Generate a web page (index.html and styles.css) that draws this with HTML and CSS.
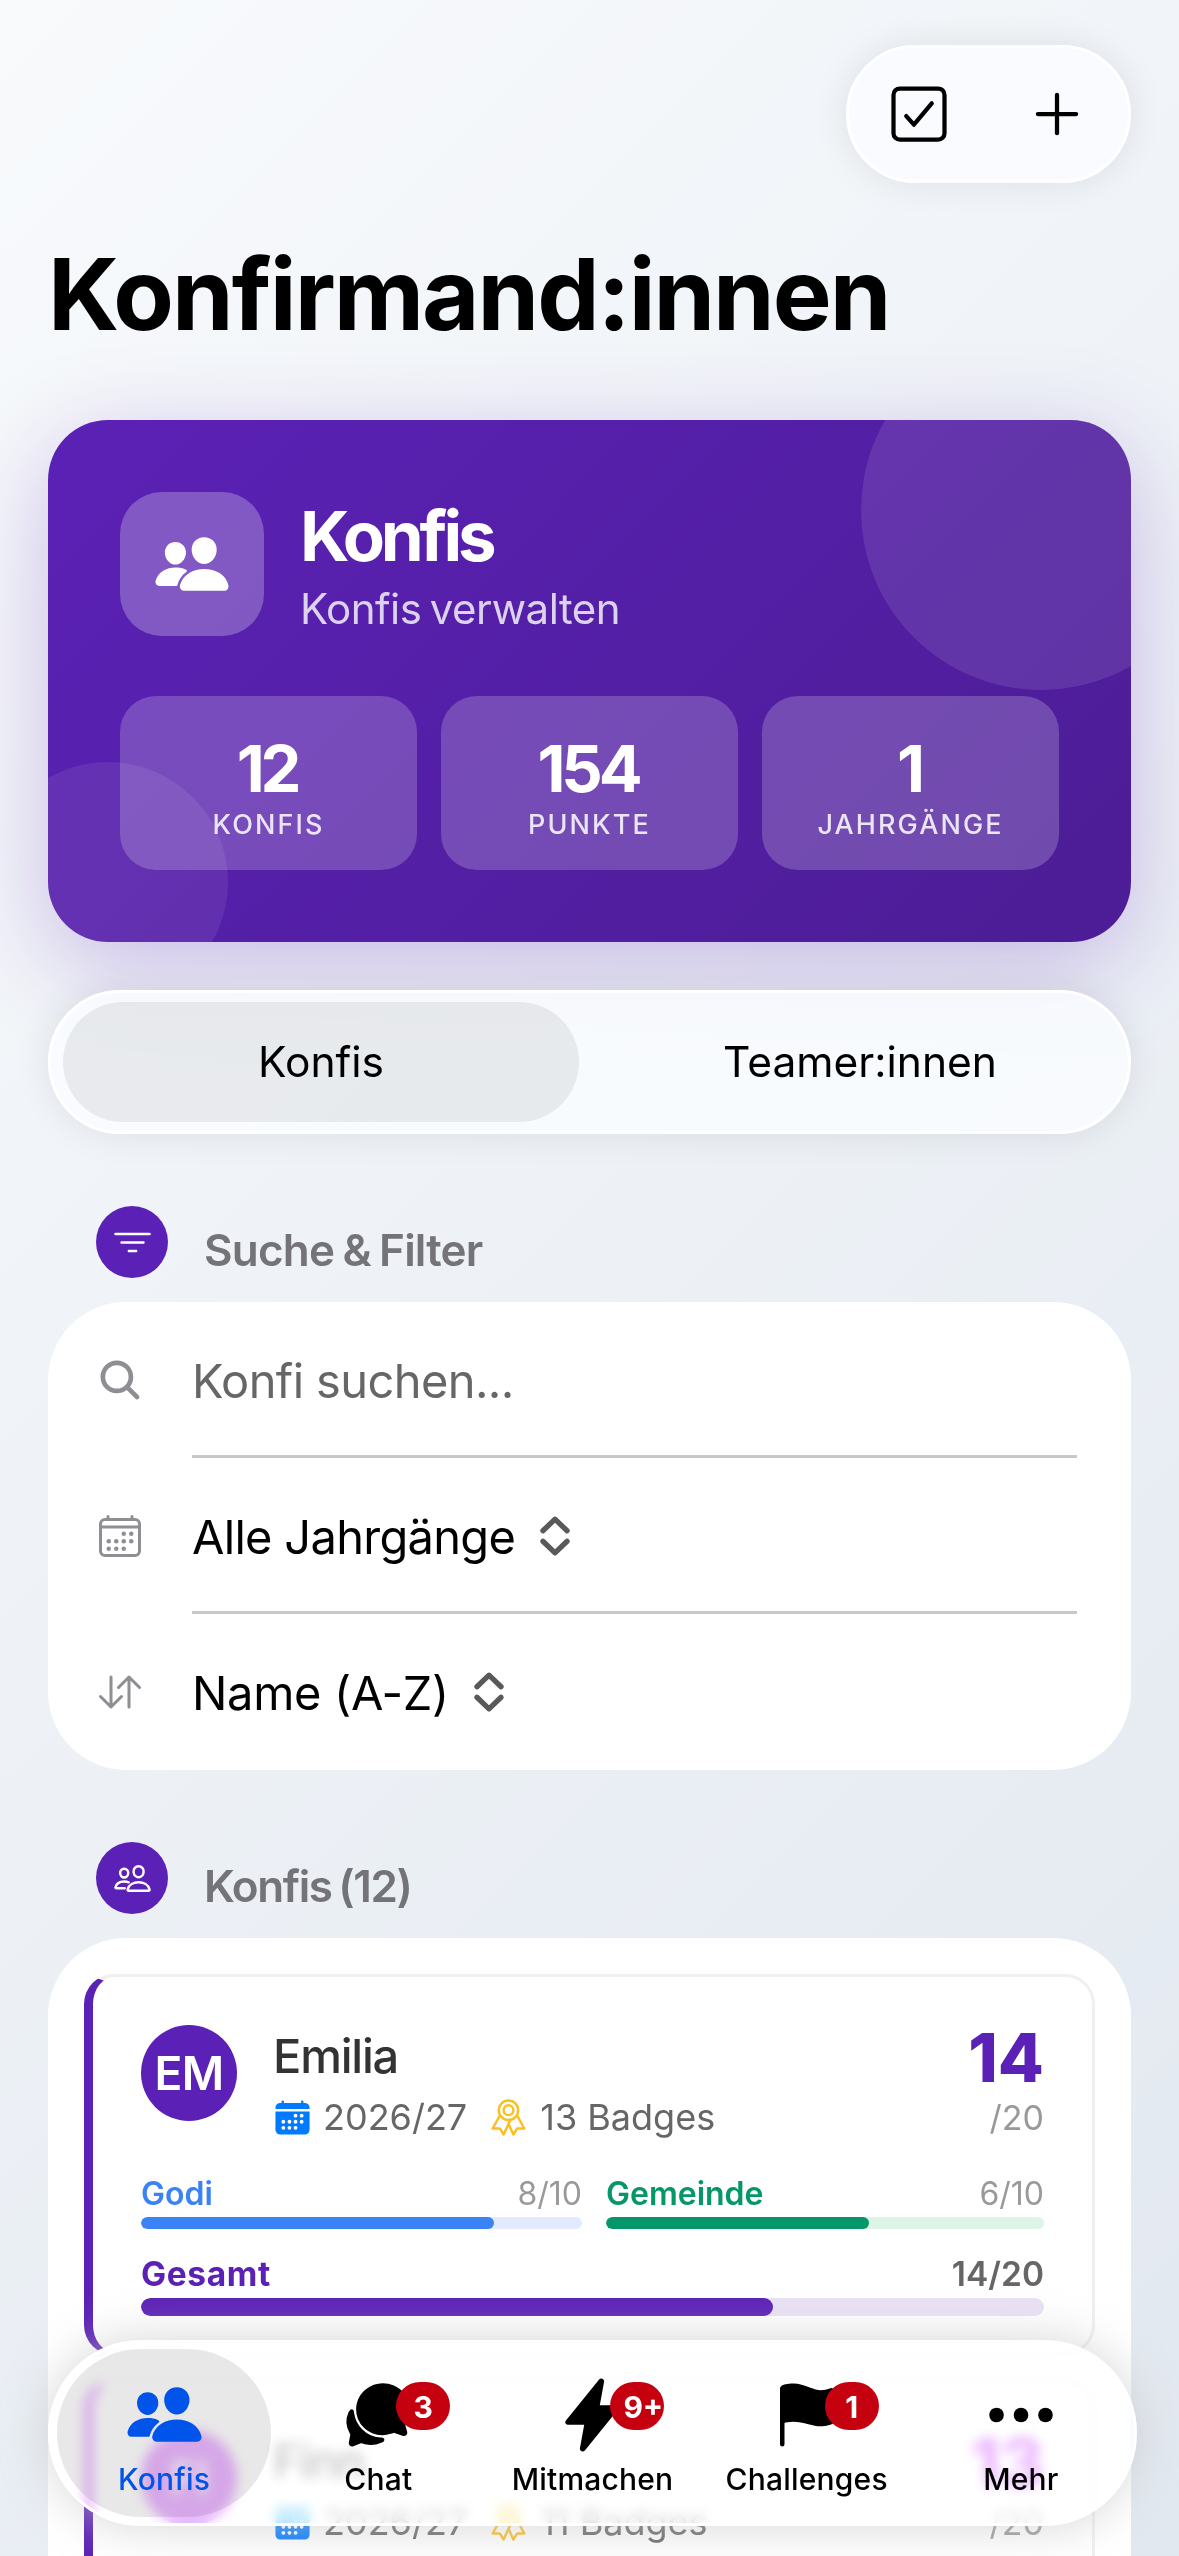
FILE: index.html
```html
<!DOCTYPE html>
<html lang="de">
<head>
<meta charset="utf-8">
<title>Konfirmand:innen</title>
<link rel="stylesheet" href="styles.css">
</head>
<body>
<svg class="sprite" aria-hidden="true">
  <symbol id="people" viewBox="0 0 512 512"><path d="M336 256c-20.56 0-40.44-9.18-56-25.84-15.13-16.25-24.37-37.92-26-61-1.74-24.62 5.77-47.26 21.14-63.76S312 80 336 80c23.83 0 45.38 9.06 60.7 25.52 15.47 16.62 23 39.22 21.26 63.63-1.67 23.11-10.9 44.77-26 61C376.44 246.82 356.57 256 336 256zM467.83 432H204.18a27.71 27.71 0 01-22-10.67 30.22 30.22 0 01-5.26-25.79c8.42-33.81 29.28-61.85 60.32-81.08C264.79 297.4 299.86 288 336 288c36.85 0 71 9 98.71 26.05 31.11 19.13 52 47.33 60.38 81.55a30.27 30.27 0 01-5.32 25.78A27.68 27.68 0 01467.83 432zM147 260c-35.19 0-66.13-32.72-69-72.93-1.42-20.6 5-39.65 18-53.62 12.86-13.83 31-21.45 51-21.45s38 7.66 50.93 21.57c13.1 14.08 19.5 33.09 18 53.52C213.06 227.29 182.13 260 147 260zM212.66 291.45c-17.59-8.6-40.42-12.9-65.65-12.9-29.46 0-58.07 7.68-80.57 21.62-25.51 15.83-42.67 38.88-49.6 66.71a27.39 27.39 0 004.79 23.36A25.32 25.32 0 0041.72 400h111a8 8 0 007.87-6.57c.11-.63.25-1.26.41-1.88 8.48-34.06 28.35-62.84 57.71-83.82a8 8 0 00-.63-13.39c-1.57-.92-3.37-1.89-5.42-2.89z"/></symbol>
  <symbol id="people-outline" viewBox="0 0 512 512"><g class="line"><path d="M402 168c-2.93 40.67-33.1 72-66 72s-63.12-31.32-66-72c-3-42.31 26.37-72 66-72s69 30.46 66 72z"/><path d="M336 304c-65.17 0-127.84 32.37-143.54 95.41-2.08 8.34 3.15 16.59 11.72 16.59h263.65c8.57 0 13.77-8.25 11.72-16.59C463.85 335.36 401.18 304 336 304z"/><path d="M200 185.94c-2.34 32.48-26.72 58.06-53 58.06s-50.7-25.57-53-58.06C91.61 152.15 115.34 128 147 128s55.39 24.77 53 57.94z"/><path d="M206 306c-18.05-8.27-37.93-11.45-59-11.45-52 0-102.1 25.85-114.65 76.2-1.65 6.66 2.53 13.25 9.37 13.25H154"/></g></symbol>
  <symbol id="calendar" viewBox="0 0 512 512"><path d="M480 128a64 64 0 00-64-64h-16V48a16 16 0 00-32 0v16H144V48a16 16 0 00-32 0v16H96a64 64 0 00-64 64v12a4 4 0 004 4h440a4 4 0 004-4zM32 416a64 64 0 0064 64h320a64 64 0 0064-64V179a3 3 0 00-3-3H35a3 3 0 00-3 3z"/><g fill="#fff"><circle cx="336" cy="240" r="24"/><circle cx="424" cy="240" r="24" opacity="0"/><circle cx="416" cy="240" r="24"/><circle cx="156" cy="316" r="24"/><circle cx="242" cy="316" r="24"/><circle cx="336" cy="316" r="24"/><circle cx="416" cy="316" r="24"/><circle cx="156" cy="392" r="24"/><circle cx="242" cy="392" r="24"/><circle cx="328" cy="392" r="24"/></g></symbol>
  <symbol id="calendar-outline" viewBox="0 0 512 512"><g class="line"><rect x="48" y="80" width="416" height="384" rx="48"/><path d="M128 48v32M384 48v32M464 160H48"/></g><circle cx="296" cy="232" r="24"/><circle cx="376" cy="232" r="24"/><circle cx="136" cy="312" r="24"/><circle cx="216" cy="312" r="24"/><circle cx="296" cy="312" r="24"/><circle cx="376" cy="312" r="24"/><circle cx="136" cy="392" r="24"/><circle cx="216" cy="392" r="24"/><circle cx="296" cy="392" r="24"/></symbol>
  <symbol id="calendar-small" viewBox="0 0 512 512"><path d="M480 128a64 64 0 00-64-64h-16V48a16 16 0 00-32 0v16H144V48a16 16 0 00-32 0v16H96a64 64 0 00-64 64v12a4 4 0 004 4h440a4 4 0 004-4zM32 416a64 64 0 0064 64h320a64 64 0 0064-64V179a3 3 0 00-3-3H35a3 3 0 00-3 3z"/><g fill="#fff"><circle cx="296" cy="232" r="25"/><circle cx="376" cy="232" r="25"/><circle cx="136" cy="312" r="25"/><circle cx="216" cy="312" r="25"/><circle cx="296" cy="312" r="25"/><circle cx="376" cy="312" r="25"/><circle cx="136" cy="392" r="25"/><circle cx="216" cy="392" r="25"/><circle cx="296" cy="392" r="25"/></g></symbol>
  <symbol id="ribbon" viewBox="0 0 512 512"><g class="line"><circle cx="256" cy="160" r="128"/><circle cx="256" cy="160" r="64"/><path d="M143.65 227.82L48 400l86.86-.42a16 16 0 0113.82 7.8L192 480l88.33-194.32M366.54 224L464 400l-86.86-.42a16 16 0 00-13.82 7.8L320 480l-64-140.8"/></g></symbol>
  <symbol id="search" viewBox="0 0 512 512"><path d="M456.69 421.39L362.6 327.3a173.81 173.81 0 0034.84-104.58C397.44 126.38 319.06 48 222.72 48S48 126.38 48 222.72s78.38 174.72 174.72 174.72A173.81 173.81 0 00327.3 362.6l94.09 94.09a25 25 0 0035.3-35.3zM97.92 222.72a124.8 124.8 0 11124.8 124.8 124.95 124.95 0 01-124.8-124.8z"/></symbol>
  <symbol id="swap" viewBox="0 0 512 512"><path class="line" d="M464 208L352 96 240 208M352 113.13V416M48 304l112 112 112-112M160 398V96"/></symbol>
  <symbol id="filter" viewBox="0 0 512 512"><path class="line" d="M32 144h448M112 256h288M208 368h96"/></symbol>
  <symbol id="checkbox" viewBox="0 0 512 512"><g class="line"><path d="M352 176L217.6 336 160 272"/><rect x="64" y="64" width="384" height="384" rx="48"/></g></symbol>
  <symbol id="add" viewBox="0 0 512 512"><path class="line" d="M256 112v288M400 256H112"/></symbol>
  <symbol id="expand" viewBox="0 0 30 40"><path d="M3.5 15L15 4l11.5 11M3.5 25L15 36l11.5-11" fill="none" stroke="currentColor" stroke-width="5" stroke-linecap="round" stroke-linejoin="round"/></symbol>
  <symbol id="chat" viewBox="0 0 512 512"><path d="M439.9 405.6a26.77 26.77 0 01-9.59-2l-56.78-20.13-.42-.17a9.88 9.88 0 00-3.91-.76 10.32 10.32 0 00-3.62.66c-1.38.52-13.81 5.19-26.85 8.77-7.07 1.94-31.68 8.27-51.43 8.27-50.48 0-97.68-19.4-132.89-54.63A183.38 183.38 0 01100.3 215.1a175.9 175.9 0 014.06-37.58c8.79-40.62 32.07-77.57 65.55-104A194.76 194.76 0 01290.3 30c52.21 0 100.86 20 137 56.18 34.16 34.27 52.88 79.33 52.73 126.87a177.86 177.86 0 01-30.3 99.15l-.19.28-.74 1-.5.68-.15.27a21.63 21.63 0 00-1.08 2.09l15.74 55.94a26.42 26.42 0 011.12 7.11 24 24 0 01-24.03 26.03z"/><path d="M299.87 425.39a15.74 15.74 0 00-10.29-8.1c-5.78-1.53-12.52-1.27-17.67-1.65a201.78 201.78 0 01-128.82-58.75A199.21 199.21 0 0186.4 244.16C85 234.42 85 232 85 232a16 16 0 00-28-10.58s-7.88 8.58-11.6 17.19a162.09 162.09 0 0011 150.06C59 393 59 395 58.42 399.5c-2.73 14.11-7.51 39-10 51.91a24 24 0 008 22.92l.46.39A24.34 24.34 0 0072 480a23.42 23.42 0 009-1.79l53.51-20.65a8.05 8.05 0 015.72 0c21.07 7.84 43 12 63.78 12a176 176 0 0074.91-16.66c5.46-2.56 14-5.34 19-11.12a15 15 0 001.95-16.39z"/></symbol>
  <symbol id="flash" viewBox="0 0 512 512"><path d="M194.82 496a18.36 18.36 0 01-18.1-21.53v-.11L204.83 320H96a16 16 0 01-12.44-26.06L302.73 23a18.45 18.45 0 0132.8 13.71c0 .3-.08.59-.13.89L307.19 192H416a16 16 0 0112.44 26.06L209.24 489a18.45 18.45 0 01-14.42 7z"/></symbol>
  <symbol id="flag" viewBox="0 0 512 512"><path d="M80 480a16 16 0 01-16-16V68.13a24 24 0 0111.88-20.6C88 40.38 112.38 32 160 32c37.21 0 78.83 14.71 115.55 27.68C305.12 70.13 333.05 80 352 80a183.84 183.84 0 0071-14.5 18 18 0 0125 16.58v219.36a20 20 0 01-12 18.31c-8.71 3.81-40.51 16.25-84 16.25-24.14 0-54.38-7.14-86.39-14.71C229.63 312.79 192.43 304 160 304c-36.87 0-55.74 5.58-64 9.11V464a16 16 0 01-16 16z"/></symbol>
  <symbol id="dots" viewBox="0 0 512 512"><circle cx="256" cy="256" r="52"/><circle cx="430" cy="256" r="52"/><circle cx="82" cy="256" r="52"/></symbol>
</svg>

<header class="header">
  <div class="toolbar glass">
    <svg class="tool"><use href="#checkbox"/></svg>
    <svg class="tool"><use href="#add"/></svg>
  </div>
  <h1 class="title">Konfirmand:innen</h1>
</header>

<main class="content">
  <section class="hero">
    <div class="hero-head">
      <div class="hero-icon"><svg><use href="#people"/></svg></div>
      <div class="hero-text">
        <h2 class="hero-title">Konfis</h2>
        <p class="hero-sub">Konfis verwalten</p>
      </div>
    </div>
    <div class="stats">
      <div class="stat"><span class="stat-num">12</span><span class="stat-label">KONFIS</span></div>
      <div class="stat"><span class="stat-num">154</span><span class="stat-label">PUNKTE</span></div>
      <div class="stat"><span class="stat-num">1</span><span class="stat-label">JAHRGÄNGE</span></div>
    </div>
  </section>

  <nav class="segment glass">
    <span class="seg seg-on">Konfis</span>
    <span class="seg">Teamer:innen</span>
  </nav>

  <div class="section-head"><span class="dot"><svg><use href="#filter"/></svg></span><h3>Suche &amp; Filter</h3></div>
  <section class="panel filters">
    <div class="row"><svg class="row-icon"><use href="#search"/></svg><div class="row-body hint">Konfi suchen...</div></div>
    <div class="row"><svg class="row-icon"><use href="#calendar-outline"/></svg><div class="row-body">Alle Jahrgänge<svg class="expand"><use href="#expand"/></svg></div></div>
    <div class="row"><svg class="row-icon"><use href="#swap"/></svg><div class="row-body sort">Name (A-Z)<svg class="expand"><use href="#expand"/></svg></div></div>
  </section>

  <div class="section-head"><span class="dot"><svg><use href="#people-outline"/></svg></span><h3 class="count">Konfis (12)</h3></div>
  <section class="panel list">
    <article class="konfi">
      <div class="konfi-head">
        <div class="avatar">EM</div>
        <div class="who">
          <div class="name">Emilia</div>
          <div class="meta"><svg class="cal"><use href="#calendar-small"/></svg><span>2026/27</span><svg class="rib"><use href="#ribbon"/></svg><span>13 Badges</span></div>
        </div>
        <div class="points"><b>14</b><span>/20</span></div>
      </div>
      <div class="bars">
        <div class="godi"><div class="label"><b>Godi</b><span>8/10</span></div><div class="track"><div class="fill" style="width:80%"></div></div></div>
        <div class="gemeinde"><div class="label"><b>Gemeinde</b><span>6/10</span></div><div class="track"><div class="fill" style="width:60%"></div></div></div>
      </div>
      <div class="gesamt"><div class="label"><b>Gesamt</b><span>14/20</span></div><div class="track"><div class="fill" style="width:70%"></div></div></div>
    </article>
    <article class="konfi cut">
      <div class="konfi-head">
        <div class="avatar">FI</div>
        <div class="who">
          <div class="name">Finn</div>
          <div class="meta"><svg class="cal"><use href="#calendar-small"/></svg><span>2026/27</span><svg class="rib"><use href="#ribbon"/></svg><span>11 Badges</span></div>
        </div>
        <div class="points"><b>13</b><span>/20</span></div>
      </div>
    </article>
  </section>
</main>

<nav class="tabbar">
  <a class="tab tab-on"><svg class="big"><use href="#people"/></svg><span>Konfis</span></a>
  <a class="tab"><svg><use href="#chat"/></svg><i class="badge">3</i><span>Chat</span></a>
  <a class="tab"><svg class="bolt"><use href="#flash"/></svg><i class="badge wide">9+</i><span>Mitmachen</span></a>
  <a class="tab"><svg><use href="#flag"/></svg><i class="badge">1</i><span>Challenges</span></a>
  <a class="tab"><svg><use href="#dots"/></svg><span>Mehr</span></a>
</nav>
</body>
</html>
```
FILE: styles.css
```css
* { box-sizing: border-box; margin: 0; padding: 0; }
html { overflow: hidden; }
body {
  position: relative;
  width: 1179px;
  height: 2556px;
  overflow: hidden;
  padding: 45px 48px 0;
  font-family: Inter, "Liberation Sans", sans-serif;
  color: #000;
  background: linear-gradient(135deg, #f8fafc 0%, #e2e8f0 100%);
}
svg { display: block; flex: none; fill: currentColor; }
.sprite { position: absolute; width: 0; height: 0; }
.line { fill: none; stroke: currentColor; stroke-width: 32; stroke-linecap: round; stroke-linejoin: round; }

.glass {
  border: 3px solid #fff;
  background: rgba(250, 253, 255, 0.82);
  box-shadow: 0 0 36px rgba(0, 0, 0, 0.09);
}

/* Header */
.header { display: flex; flex-direction: column; }
.toolbar {
  align-self: flex-end;
  display: flex;
  align-items: center;
  justify-content: space-between;
  width: 285px;
  height: 138px;
  padding: 0 37px 0 36px;
  border-radius: 69px;
}
.tool { width: 68px; height: 68px; }
.title { margin-top: 51px; font-size: 99px; line-height: 120px; font-weight: 700; letter-spacing: -2px; white-space: nowrap; }

/* Hero */
.hero {
  position: relative;
  overflow: hidden;
  margin-top: 66px;
  height: 522px;
  padding: 72px;
  border-radius: 60px;
  color: #fff;
  background: linear-gradient(135deg, #5b21b6 0%, #4c1d95 100%);
}
.content { position: relative; }
.content::before {
  content: "";
  position: absolute;
  inset: 0 0 auto;
  height: 522px;
  border-radius: 60px;
  box-shadow: 0 24px 96px rgba(91, 33, 182, 0.27);
}
.hero::before, .hero::after { content: ""; position: absolute; border-radius: 50%; }
.hero::before { width: 360px; height: 360px; top: -90px; right: -90px; background: rgba(255, 255, 255, 0.1); }
.hero::after { width: 240px; height: 240px; bottom: -60px; left: -60px; background: rgba(255, 255, 255, 0.08); }
.hero-head { display: flex; gap: 36px; height: 144px; }
.hero-icon { display: flex; align-items: center; justify-content: center; width: 144px; height: 144px; border-radius: 42px; background: rgba(255, 255, 255, 0.25); }
.hero-icon svg { width: 78px; height: 78px; }
.hero-text { display: flex; flex-direction: column; gap: 10px; padding-top: 6px; }
.hero-title { font-size: 69px; line-height: 76px; font-weight: 700; letter-spacing: -4.2px; }
.hero-sub { font-size: 42px; line-height: 50px; letter-spacing: -0.5px; word-spacing: -3px; color: rgba(255, 255, 255, 0.8); }
.stats { display: grid; grid-template-columns: repeat(3, 1fr); gap: 24px; margin-top: 60px; }
.stat { display: flex; flex-direction: column; align-items: center; gap: 6px; height: 174px; padding-top: 40px; border-radius: 36px; background: rgba(255, 255, 255, 0.2); }
.stat-num { font-size: 65px; line-height: 66px; font-weight: 700; letter-spacing: -4.2px; text-indent: -3px; }
.stat-label { font-size: 27px; line-height: 34px; font-weight: 500; letter-spacing: 2.1px; color: rgba(255, 255, 255, 0.85); }

/* Segment */
.segment { position: relative; display: grid; grid-template-columns: 1fr 1fr; gap: 21px; height: 144px; margin-top: 48px; padding: 9px 12px; border-radius: 72px; }
.seg { display: flex; align-items: center; justify-content: center; padding: 0 0 2px 4px; border-radius: 60px; font-size: 42.5px; letter-spacing: 0; }
.seg-on { padding-left: 0; background: rgba(0, 0, 0, 0.065); }

/* Sections */
.section-head { display: flex; align-items: center; gap: 36px; height: 72px; margin: 72px 48px 24px; }
.dot { display: flex; align-items: center; justify-content: center; width: 72px; height: 72px; border-radius: 50%; color: #fff; background: #5b21b6; }
.dot svg { width: 39px; height: 39px; }
.section-head h3 { padding-top: 16px; font-size: 44px; line-height: 56px; font-weight: 600; letter-spacing: -0.8px; word-spacing: -2px; color: #737378; }
.section-head .count { letter-spacing: -1.4px; word-spacing: -3px; }
.panel { border-radius: 78px; background: #fff; }
.filters { height: 468px; padding: 0 54px 0 48px; }
.row { display: flex; align-items: center; gap: 48px; height: 156px; }
.row-icon { width: 48px; height: 48px; color: #8e8e93; }
.row-body { flex: 1; display: flex; align-items: center; gap: 24px; height: 156px; padding-top: 3px; border-bottom: 3px solid #c8c7cc; font-size: 47px; letter-spacing: -0.7px; }
.row-body.sort { border-bottom-color: transparent; letter-spacing: -0.3px; gap: 24px; }
.row-body.hint { color: #666; letter-spacing: -0.6px; }
.expand { width: 32px; height: 42px; color: #595959; }

/* List */
.list { display: flex; flex-direction: column; gap: 24px; height: 618px; padding: 36px 36px 0; border-radius: 78px 78px 0 0; }
.konfi { height: 381px; padding: 48px 48px 36px; border: 3px solid #f0f0f0; border-left: 9px solid #5b21b6; border-radius: 30px; }
.konfi.cut { height: 177px; padding-bottom: 0; border-bottom: 0; border-radius: 30px 30px 0 0; }
.konfi-head { display: flex; gap: 36px; height: 114px; }
.avatar { width: 96px; height: 96px; border-radius: 50%; background: #5b21b6; color: #fff; font-size: 46px; line-height: 97px; font-weight: 600; letter-spacing: -0.6px; text-align: center; }
.who { flex: 1; padding-top: 3px; }
.name { font-size: 47px; line-height: 56px; font-weight: 500; letter-spacing: -1.2px; color: #333; }
.meta { display: flex; align-items: center; margin-top: 12px; height: 42px; font-size: 36px; line-height: 42px; color: #666; }
.cal { width: 39px; height: 39px; margin-right: 11px; color: #007aff; }
.rib { width: 39px; height: 39px; margin: 0 12px 0 22px; color: #fbbf24; }
.points { display: flex; flex-direction: column; align-items: flex-end; }
.points b { font-size: 67px; line-height: 66px; font-weight: 800; color: #5b21b6; }
.points span { margin-top: 6px; font-size: 34px; line-height: 42px; color: #999; }
.bars { display: grid; grid-template-columns: 441fr 438fr; gap: 24px; margin-top: 35px; }
.label { display: flex; justify-content: space-between; height: 40px; font-size: 32px; line-height: 40px; color: #999; }
.label b { font-weight: 600; }
.track { height: 12px; margin-top: 3px; border-radius: 6px; overflow: hidden; }
.fill { height: 100%; border-radius: inherit; background: #3b82f6; }
.godi b { color: #3b82f6; }
.godi .track { background: #e1eafe; }
.gemeinde b { color: #059669; }
.gemeinde .fill { background: #059669; }
.gemeinde .track { background: #dcf5e6; }
.gesamt { margin-top: 25px; }
.gesamt .label { font-size: 33.5px; font-weight: 600; color: #666; }
.gesamt .label b { font-weight: 700; letter-spacing: 0.6px; color: #5b21b6; }
.gesamt .track { height: 18px; margin-top: 4px; border-radius: 9px; background: #e9e2f5; }
.gesamt .fill { background: #5b21b6; }

/* Tab bar floats over the scrolled list */
.tabbar {
  position: absolute;
  left: 48px;
  top: 2340px;
  display: grid;
  grid-template-columns: repeat(5, 1fr);
  width: 1089px;
  height: 186px;
  padding: 6px;
  border: 3px solid #fff;
  border-radius: 93px;
  background: rgba(255, 255, 255, 0.72);
  backdrop-filter: saturate(360%) blur(6px);
  box-shadow: 0 0 48px rgba(200, 200, 200, 0.75);
}
.tab { position: relative; display: flex; flex-direction: column; align-items: center; padding-top: 30px; border-radius: 84px; }
.tab svg { width: 72px; height: 72px; }
.tab .big { width: 79px; height: 79px; margin: -4px 0 -3px; }
.tab .bolt { width: 78px; height: 78px; margin: -3px 0; }
.tab span { margin-top: 8px; font-size: 30px; line-height: 40px; font-weight: 500; letter-spacing: 0.2px; }
.tab-on { color: #0054e9; background: rgba(0, 0, 0, 0.09); }
.badge {
  position: absolute;
  top: 33px;
  left: 125px;
  width: 54px;
  height: 48px;
  border-radius: 24px;
  overflow: hidden;
  color: #fff;
  background: #c5000f;
  font: 700 30px/50px Inter, sans-serif;
  text-align: center;
}
.badge.wide { padding-left: 13px; text-align: left; }
```
